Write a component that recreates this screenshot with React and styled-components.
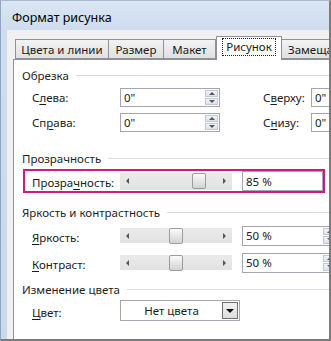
import React from 'react';
import styled, { createGlobalStyle } from 'styled-components';

const GlobalStyle = createGlobalStyle`
  html, body { margin: 0; padding: 0; background: #fff; }
  body { font-family: "Noto Sans", "Open Sans", sans-serif; color: #1a1a1a; }
`;

const Window = styled.div`
  width: 331px;
  height: 341px;
  box-sizing: border-box;
  display: flex;
  flex-direction: column;
  background: linear-gradient(#dbe6f3, #cddcee 30px, #c9d9ec);
  border-top: 1px solid #a9bad0;
  border-left: 1px solid #8fa6c2;
  border-right: 2px solid #7b7b7b;
  border-bottom: 2px solid #7b7b7b;
  overflow: hidden;
`;

const TitleBar = styled.div`
  height: 29px;
  flex: none;
  display: flex;
  align-items: center;
  padding: 3px 0 0 11px;
  box-sizing: border-box;
  font-size: 12.5px;
  color: #000;
`;

const Body = styled.div`
  flex: 1;
  display: flex;
  flex-direction: column;
  margin-left: 6px;
  padding: 6px 0 0 6px;
  background: #f0f0f0;
  min-height: 0;
`;

const Tabs = styled.div`
  display: flex;
  align-items: flex-end;
  height: 23px;
  margin-left: 2px;
  position: relative;
  z-index: 1;
`;

const Tab = styled.div`
  flex: none;
  box-sizing: border-box;
  width: ${p => p.$w}px;
  height: ${p => (p.$active ? 24 : 20)}px;
  margin-bottom: ${p => (p.$active ? -1 : 0)}px;
  display: flex;
  align-items: center;
  justify-content: ${p => (p.$clip ? 'flex-start' : 'center')};
  padding-left: ${p => (p.$clip ? 6 : 0)}px;
  font-size: 11.5px;
  border: 1px solid #8e9199;
  border-bottom: ${p => (p.$active ? 'none' : '1px solid #8e9199')};
  border-left-width: ${p => (p.$first || p.$active ? 1 : 0)}px;
  background: ${p => (p.$active ? '#fff' : 'linear-gradient(#f3f3f3, #e9e9e9 50%, #e0e0e0)')};
  padding-bottom: ${p => (p.$active ? 3 : 0)}px;
  white-space: nowrap;
  overflow: hidden;
`;

const Focus = styled.span`
  border: 1px dotted #222;
  padding: 0 3px 1px;
  line-height: 15px;
`;

const Panel = styled.div`
  flex: 1;
  width: 340px;
  background: #fff;
  border: 1px solid #8e9199;
  border-bottom: none;
  padding: 7px 0 0 8px;
  box-sizing: border-box;
`;

const GroupHeader = styled.div`
  display: flex;
  align-items: center;
  gap: 7px;
  height: 16px;
  margin-top: ${p => p.$mt || 0}px;
  font-size: 11.5px;
  color: #1e1e1e;
  &::after {
    content: '';
    flex: 1;
    border-top: 1px solid #dcdcdc;
  }
`;

const CropGrid = styled.div`
  display: grid;
  grid-template-columns: 88px 100px 43px 48px 80px;
  grid-auto-rows: 24px;
  row-gap: 1px;
  align-items: center;
  margin-top: 2px;
  padding-left: 10px;
`;

const Label = styled.span`
  font-size: 11.5px;
  color: #1a1a1a;
  white-space: nowrap;
  u { text-decoration-thickness: 1px; text-underline-offset: 2px; }
`;

const Input = styled.div`
  box-sizing: border-box;
  width: ${p => p.$w || 100}px;
  height: ${p => p.$h || 19}px;
  display: flex;
  align-items: center;
  justify-content: space-between;
  border: 1px solid #a3a6ad;
  background: #fff;
  font-size: 11.5px;
  padding-left: 3px;
`;

const Spinner = styled.div`
  display: flex;
  flex-direction: column;
  gap: 1px;
  width: 14px;
  height: 100%;
  padding: 1px 1px 1px 0;
  box-sizing: border-box;
`;

const SpinButton = styled.div`
  flex: 1;
  display: flex;
  align-items: center;
  justify-content: center;
  background: linear-gradient(#f1f3f7, #dde2ea);
  border: 1px solid #c3c8d1;
  &::before {
    content: '';
    border-left: 3px solid transparent;
    border-right: 3px solid transparent;
    ${p => (p.$down ? 'border-top: 3px solid #4d5868;' : 'border-bottom: 3px solid #4d5868;')}
  }
`;

const Highlight = styled.div`
  display: flex;
  align-items: center;
  box-sizing: border-box;
  width: 302px;
  height: 24px;
  margin: 3px 0 0 1px;
  padding-left: 7px;
  border: 2px solid #d3187f;
`;

const SliderRow = styled.div`
  display: flex;
  align-items: center;
  height: 21px;
  margin-top: ${p => p.$mt || 0}px;
  padding-left: 10px;
`;

const LabelCell = styled.div`
  width: 88px;
  flex: none;
`;

const Track = styled.div`
  position: relative;
  flex: none;
  width: 112px;
  height: ${p => p.$h || 15}px;
  margin-right: 10px;
  background: linear-gradient(#eaeaea, #e2e2e2);
  display: flex;
  align-items: center;
  justify-content: space-between;
  padding: 0 6px;
  box-sizing: border-box;
`;

const Arrow = styled.span`
  width: 0;
  height: 0;
  border-top: 3px solid transparent;
  border-bottom: 3px solid transparent;
  ${p => (p.$right ? 'border-left: 3px solid #555;' : 'border-right: 3px solid #555;')}
`;

const Thumb = styled.div`
  position: absolute;
  top: 50%;
  transform: translateY(-50%);
  width: 14px;
  height: 16px;
  box-sizing: border-box;
  border: 1px solid #9c9c9c;
  border-radius: 2px;
  background: linear-gradient(#fbfbfb, #e4e4e4 55%, #d3d3d3);
`;

const Dropdown = styled.div`
  box-sizing: border-box;
  width: 120px;
  height: 21px;
  display: flex;
  align-items: center;
  border: 1px solid #a3a6ad;
  background: #fff;
  padding-right: 1px;
`;

const DropText = styled.span`
  flex: 1;
  text-align: center;
  font-size: 11.5px;
  color: #1a1a1a;
`;

const DropButton = styled.div`
  width: 16px;
  height: 17px;
  box-sizing: border-box;
  display: flex;
  align-items: center;
  justify-content: center;
  border: 1px solid #707070;
  background: linear-gradient(#f2f2f2, #dcdcdc);
  &::before {
    content: '';
    border-left: 4px solid transparent;
    border-right: 4px solid transparent;
    border-top: 4px solid #111;
  }
`;

const Slider = ({ value, h }) => (
  <Track $h={h}>
    <Arrow />
    <Thumb style={{ left: Math.round(16 + value * 0.657) }} />
    <Arrow $right />
  </Track>
);

const SpinInput = ({ value, w, h }) => (
  <Input $w={w} $h={h}>
    <span>{value}</span>
    <Spinner>
      <SpinButton />
      <SpinButton $down />
    </Spinner>
  </Input>
);

const tabs = [
  { name: 'Цвета и линии', w: 94 },
  { name: 'Размер', w: 55 },
  { name: 'Макет', w: 52 },
  { name: 'Рисунок', w: 66, active: true },
  { name: 'Замещающий текст', w: 60, clip: true },
];

export default function App() {
  return (
    <>
      <GlobalStyle />
      <Window>
        <TitleBar>Формат рисунка</TitleBar>
        <Body>
          <Tabs>
            {tabs.map((t, i) => (
              <Tab key={t.name} $w={t.w} $active={t.active} $first={i === 0} $clip={t.clip}>
                {t.active ? <Focus>{t.name}</Focus> : t.name}
              </Tab>
            ))}
          </Tabs>
          <Panel>
            <GroupHeader>Обрезка</GroupHeader>
            <CropGrid>
              <Label>С<u>л</u>ева:</Label>
              <SpinInput value='0"' />
              <span />
              <Label>С<u>в</u>ерху:</Label>
              <SpinInput value='0"' />
              <Label>Сп<u>р</u>ава:</Label>
              <SpinInput value='0"' />
              <span />
              <Label>С<u>н</u>изу:</Label>
              <SpinInput value='0"' />
            </CropGrid>

            <GroupHeader $mt={16}>Прозрачность</GroupHeader>
            <Highlight>
              <LabelCell>
                <Label>Прозра<u>ч</u>ность:</Label>
              </LabelCell>
              <Slider value={85} h={17} />
              <Input $w={81} $h={20}>85 %</Input>
            </Highlight>

            <GroupHeader $mt={11}>Яркость и контрастность</GroupHeader>
            <SliderRow $mt={5}>
              <LabelCell>
                <Label><u>Я</u>ркость:</Label>
              </LabelCell>
              <Slider value={50} />
              <SpinInput value="50 %" w={96} h={20} />
            </SliderRow>
            <SliderRow $mt={6}>
              <LabelCell>
                <Label><u>К</u>онтраст:</Label>
              </LabelCell>
              <Slider value={50} />
              <SpinInput value="50 %" w={96} h={20} />
            </SliderRow>

            <GroupHeader $mt={8}>Изменение цвета</GroupHeader>
            <SliderRow $mt={3}>
              <LabelCell>
                <Label><u>Ц</u>вет:</Label>
              </LabelCell>
              <Dropdown>
                <DropText>Нет цвета</DropText>
                <DropButton />
              </Dropdown>
            </SliderRow>
          </Panel>
        </Body>
      </Window>
    </>
  );
}
